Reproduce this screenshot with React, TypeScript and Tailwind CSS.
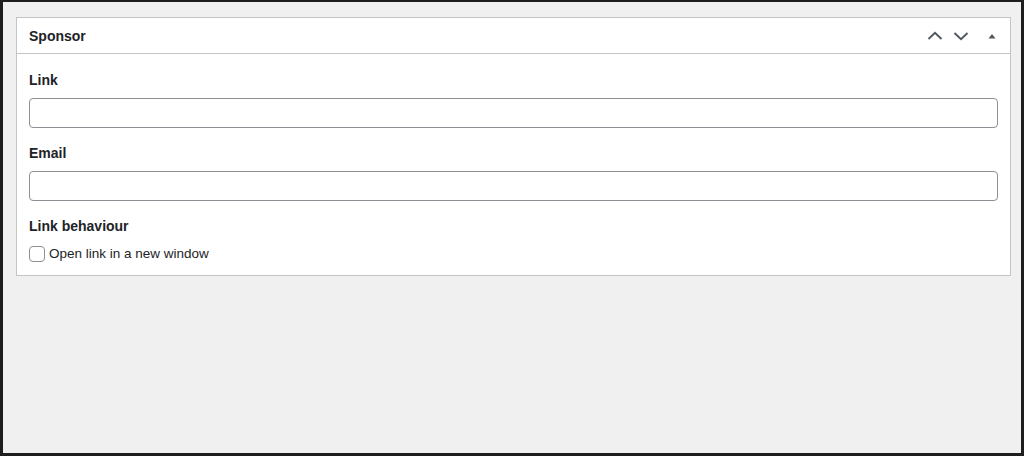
import React from "react";

export default function App() {
  return (
    <div
      className="w-[1024px] h-[456px] bg-[#f0f0f1] border-l-[3px] border-t-[2px] border-r-[3px] border-b-[3px] border-[#1e1e1e] pl-[13px] pt-[15px] pr-[11px]"
      style={{ fontFamily: '"Liberation Sans", Arial, sans-serif' }}
    >
      <div className="w-[995px] bg-white border border-[#c3c4c7]">
        <div className="h-[36px] border-b border-[#c3c4c7] flex items-center pl-[12px] pr-[13px]">
          <h2 className="text-[14px] font-bold text-[#1d2327] flex-1 pt-[1px]">Sponsor</h2>
          <div className="flex items-center text-[#50575e]">
            <svg width="18" height="16" viewBox="0 0 18 16" className="mr-[8px]">
              <path d="M2.5 11 L9 4.8 L15.5 11" fill="none" stroke="#50575e" strokeWidth="1.9" />
            </svg>
            <svg width="18" height="16" viewBox="0 0 18 16" className="mr-[17px]">
              <path d="M2.5 5 L9 11.2 L15.5 5" fill="none" stroke="#50575e" strokeWidth="1.9" />
            </svg>
            <svg width="10" height="10" viewBox="0 0 10 10">
              <path d="M1.5 7.5 L5 3 L8.5 7.5 Z" fill="#50575e" />
            </svg>
          </div>
        </div>
        <div className="pl-[12px] pr-[12px] pt-[16px] pb-[12px] text-[#1d2327]">
          <label className="block text-[14px] font-bold leading-[20px]">Link</label>
          <input
            type="text"
            className="mt-[8px] block w-full h-[30px] border border-[#8c8f94] rounded-[4px] bg-white"
          />
          <label className="block mt-[15px] text-[14px] font-bold leading-[20px]">Email</label>
          <input
            type="text"
            className="mt-[8px] block w-full h-[30px] border border-[#8c8f94] rounded-[4px] bg-white"
          />
          <label className="block mt-[15px] text-[14px] font-bold leading-[20px]">Link behaviour</label>
          <label className="mt-[9px] flex items-center text-[13.5px] leading-[18px]">
            <span className="w-[16px] h-[16px] border border-[#8c8f94] rounded-[4px] bg-white mr-[4px]" />
            Open link in a new window
          </label>
        </div>
      </div>
    </div>
  );
}
